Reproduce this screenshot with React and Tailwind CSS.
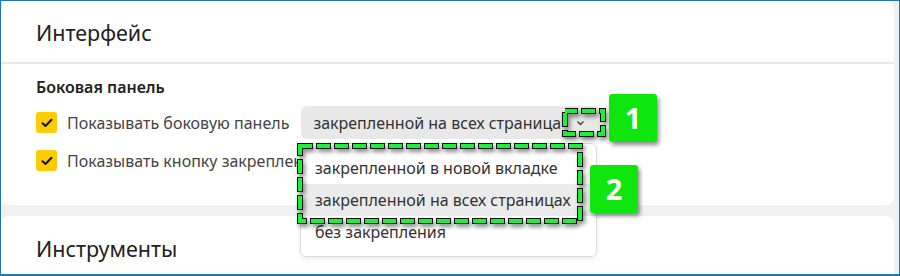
import React from 'react';

const font = { fontFamily: '"Noto Sans", "Open Sans", sans-serif' };

const Check = () => (
  <div className="w-[21px] h-[21px] rounded-[3px] bg-[#ffcc00] flex items-center justify-center shrink-0">
    <svg width="12" height="10" viewBox="0 0 12 10">
      <path d="M1.5 5.2 L4.5 8 L10.5 1.8" fill="none" stroke="#111" strokeWidth="2" strokeLinecap="round" strokeLinejoin="round" />
    </svg>
  </div>
);

// dashed green frame used for the annotations
const DashFrame = ({ w, h }) => (
  <svg width={w} height={h} className="absolute inset-0 overflow-visible" style={{ filter: 'drop-shadow(2px 3px 2px rgba(0,0,0,0.45))' }}>
    <rect x="3" y="3" width={w - 6} height={h - 6} fill="none" stroke="#111" strokeWidth="6" strokeDasharray="15 3" strokeDashoffset="2" />
    <rect x="3" y="3" width={w - 6} height={h - 6} fill="none" stroke="#1cf03c" strokeWidth="4" strokeDasharray="13 5" strokeDashoffset="1" />
  </svg>
);

const Badge = ({ n, className }) => (
  <div className={`absolute w-[48px] h-[48px] rounded-[3px] bg-[#0ee60e] flex items-center justify-center text-white text-[29px] font-bold shadow-[2px_3px_4px_rgba(0,0,0,0.45)] ${className}`}>
    {n}
  </div>
);

export default function App() {
  return (
    <div className="relative w-[900px] h-[276px] overflow-hidden border border-[#1e78b4] border-b-2 bg-[#f1f1f1]" style={font}>
      <div className="pr-[5px] flex flex-col gap-[11px]">
        {/* Интерфейс */}
        <div className="bg-white rounded-lg h-[204px]">
          <div className="h-[63px] border-b-2 border-[#e8e8e8] px-[35px] pt-[4px] flex items-center text-[21.5px] text-[#222]">
            Интерфейс
          </div>
          <div className="px-[35px] pt-[13px]">
            <div className="text-[16px] font-semibold text-[#222] leading-[20px]">Боковая панель</div>
            <div className="flex items-center mt-[9px] h-[33px]">
              <Check />
              <span className="ml-[10px] text-[16px] text-[#444] whitespace-nowrap">Показывать боковую панель</span>
              <div className="ml-[12px] w-[300px] h-[33px] rounded-md bg-[#e8e8e8] flex items-center pl-[12px] pr-[16px]">
                <div className="w-[248px] overflow-hidden whitespace-nowrap text-[16px] text-[#333]">закрепленной на всех страницах</div>
                <svg className="ml-auto" width="9" height="6" viewBox="0 0 9 6">
                  <path d="M1.5 1.5 L4.5 4.5 L7.5 1.5" fill="none" stroke="#444" strokeWidth="1.4" />
                </svg>
              </div>
            </div>
            <div className="flex items-center mt-[5px] h-[33px]">
              <Check />
              <span className="ml-[10px] text-[16px] text-[#444] whitespace-nowrap">Показывать кнопку закрепления</span>
            </div>
          </div>
        </div>

        {/* Инструменты */}
        <div className="bg-white rounded-lg h-[80px] px-[35px] pt-[17px]">
          <div className="text-[21.5px] text-[#222]">Инструменты</div>
        </div>
      </div>

      {/* open dropdown */}
      <div className="absolute left-[299px] top-[142px] w-[297px] h-[114px] bg-white border border-[#dcdcdc] rounded-md shadow-[0_2px_6px_rgba(0,0,0,0.08)] py-[8px] text-[16px] text-[#333]">
        <div className="h-[32px] flex items-center px-[14px] whitespace-nowrap">закрепленной в новой вкладке</div>
        <div className="h-[32px] flex items-center px-[14px] whitespace-nowrap bg-[#ebebeb]">закрепленной на всех страницах</div>
        <div className="h-[32px] flex items-center px-[14px] whitespace-nowrap">без закрепления</div>
      </div>

      {/* annotations */}
      <div className="absolute left-[561px] top-[107px] w-[44px] h-[29px]">
        <DashFrame w={44} h={29} />
      </div>
      <Badge n="1" className="left-[608px] top-[93px]" />

      <div className="absolute left-[296px] top-[142px] w-[286px] h-[81px]">
        <DashFrame w={286} h={81} />
      </div>
      <Badge n="2" className="left-[589px] top-[164px]" />
    </div>
  );
}
